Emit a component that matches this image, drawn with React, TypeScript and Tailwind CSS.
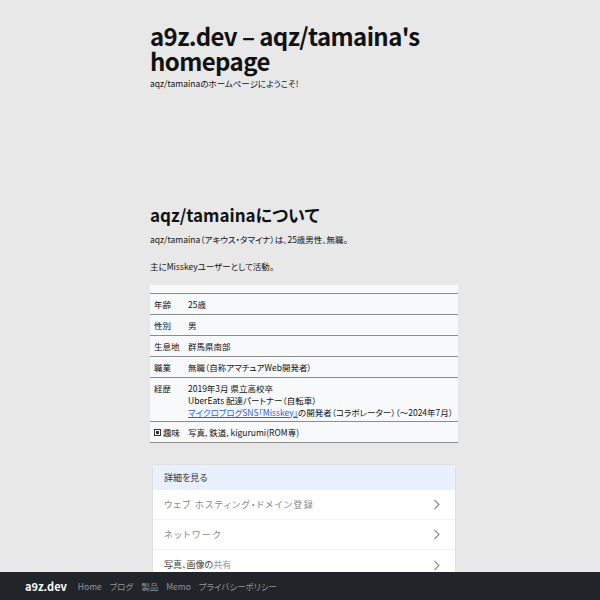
import React from 'react';

const rows: { label: string; value: React.ReactNode }[] = [
  { label: '年齢', value: '25歳' },
  { label: '性別', value: '男' },
  { label: '生息地', value: '群馬県南部' },
  { label: '職業', value: '無職（自称アマチュアWeb開発者）' },
  {
    label: '経歴',
    value: (
      <div className="flex flex-col leading-[12px]">
        <span>2019年3月 県立高校卒</span>
        <span>UberEats 配達パートナー（自転車）</span>
        <span className="whitespace-nowrap">
          <a className="text-[#2563eb] underline">マイクロブログSNS「Misskey」</a>の開発者（コラボレーター）（〜2024年7月）
        </span>
      </div>
    ),
  },
];

function Chevron() {
  return (
    <svg width="8" height="11" viewBox="0 0 8 11" fill="none" className="shrink-0">
      <path d="M1.5 1 L6 5.5 L1.5 10" stroke="#8a8a8a" strokeWidth="1.1" />
    </svg>
  );
}

export default function App() {
  return (
    <div
      className="min-h-[600px] bg-[#e8e8e8] text-[#111]"
      style={{ fontFamily: '"Noto Sans CJK JP", "Noto Sans", sans-serif', fontFeatureSettings: '"palt"' }}
    >
      <div className="ml-[150px] w-[308px] pt-[23px] pb-[40px]">
        <h1 className="text-[24px] font-bold leading-[25px] tracking-[-0.6px]">
          a9z.dev – aqz/tamaina's homepage
        </h1>
        <p className="mt-[3px] text-[8.5px] leading-[14px]">aqz/tamainaのホームページにようこそ!</p>

        <h2 className="mt-[113px] text-[17px] font-bold leading-[24px]">aqz/tamainaについて</h2>
        <p className="mt-[5px] text-[8.5px] leading-[14px]">aqz/tamaina（アキウス・タマイナ）は、25歳男性、無職。</p>
        <p className="mt-[13px] text-[8.5px] leading-[14px]">主にMisskeyユーザーとして活動。</p>

        <div className="mt-[12px] bg-[#f8f9fa] pt-[8px] text-[8.5px] leading-[13px]">
          {rows.map((r) => (
            <div key={r.label} className="flex border-t border-[#8c8c8c] px-[4px] py-[3.5px]">
              <div className="w-[34px] shrink-0">{r.label}</div>
              <div>{r.value}</div>
            </div>
          ))}
          <div className="flex border-y border-[#8c8c8c] px-[4px] py-[3.5px]">
            <div className="flex w-[34px] shrink-0 items-center gap-[2px]">
              <span className="inline-block h-[7px] w-[7px] border border-[#333] p-[1px]">
                <span className="block h-full w-full bg-[#333]" />
              </span>
              <span>趣味</span>
            </div>
            <div>写真, 鉄道, kigurumi(ROM専)</div>
          </div>
        </div>

        <div className="mx-[3px] mt-[22px] overflow-hidden rounded-[2px] bg-white shadow-[0_0_2px_rgba(0,0,0,0.12)] text-[9px]">
          <div className="flex h-[25px] items-center bg-[#e8f0fe] px-[11px] text-[#333]">詳細を見る</div>
          <div className="flex h-[30px] items-center justify-between border-b border-[#f3f3f3] pl-[11px] pr-[14px] text-[#888] tracking-[1.4px]">
            <span>ウェブ ホスティング・ドメイン登録</span>
            <Chevron />
          </div>
          <div className="flex h-[30px] items-center justify-between border-b border-[#f3f3f3] pl-[11px] pr-[14px] text-[#888] tracking-[1.8px]">
            <span>ネットワーク</span>
            <Chevron />
          </div>
          <div className="flex h-[30px] items-center justify-between pl-[11px] pr-[14px] text-[#444]">
            <span>
              写真、画像の<span className="text-[#999]">共有</span>
            </span>
            <Chevron />
          </div>
        </div>
      </div>

      <nav className="fixed bottom-0 left-0 right-0 flex h-[28px] items-center gap-[8px] bg-[#212529] pl-[25px] text-[8.5px]">
        <span className="mr-[3px] text-[11px] font-bold text-white">a9z.dev</span>
        <span className="text-[#8f959b]">Home</span>
        <span className="text-[#8f959b]">ブログ</span>
        <span className="text-[#8f959b]">製品</span>
        <span className="text-[#8f959b]">Memo</span>
        <span className="text-[#8f959b]">プライバシーポリシー</span>
      </nav>
    </div>
  );
}
